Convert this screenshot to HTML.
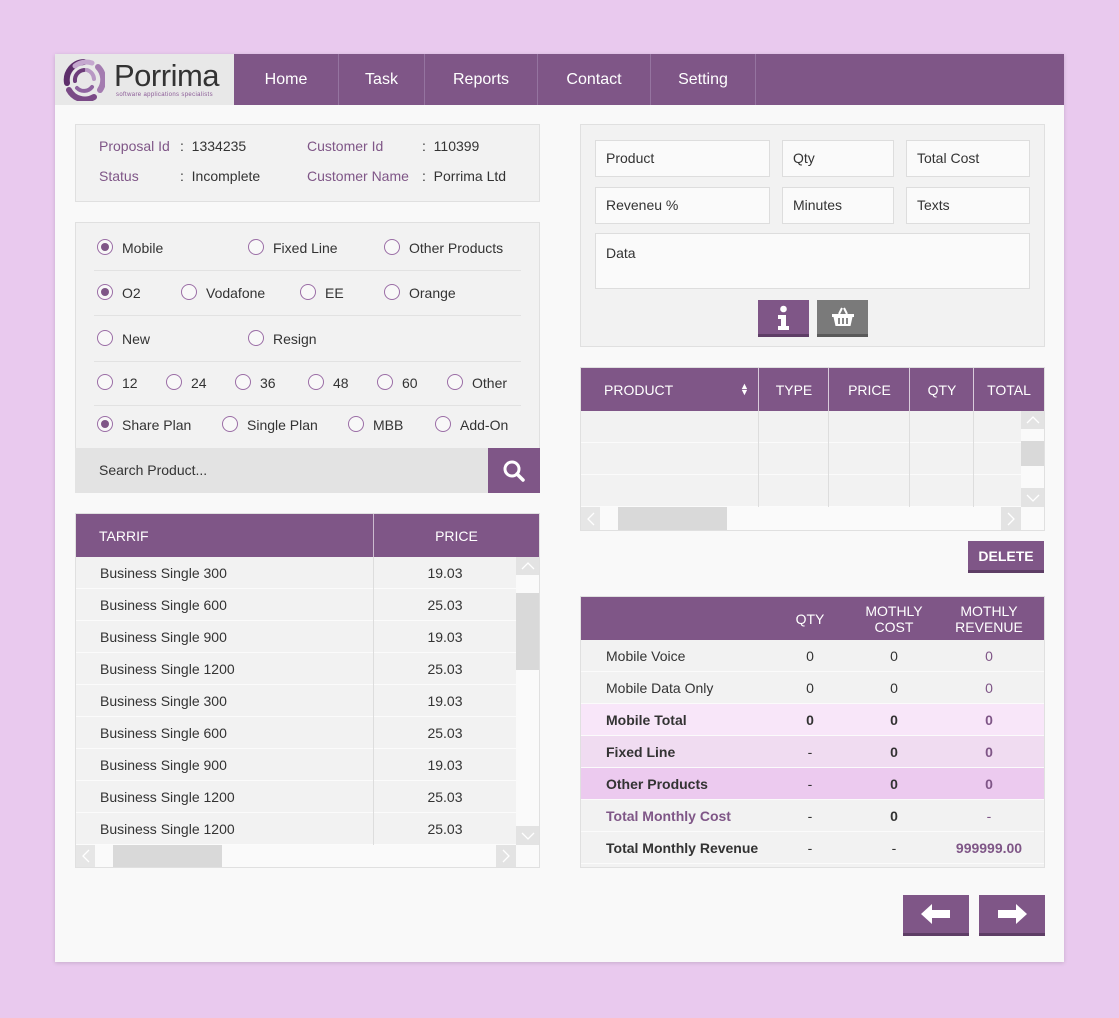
<!DOCTYPE html>
<html><head><meta charset="utf-8"><style>
*{box-sizing:border-box;margin:0;padding:0}
body{width:1119px;height:1018px;background:#e9c9ee;font-family:"Liberation Sans",Arial,sans-serif;font-size:14px;color:#333;position:relative;overflow:hidden}
.card{position:absolute;left:55px;top:54px;width:1009px;height:908px;background:#f9f9f9;box-shadow:0 1px 4px rgba(0,0,0,.15)}
.a{position:absolute}
.nav{left:0;top:0;width:1009px;height:51px;background:#7f5687}
.logo{left:0;top:0;width:179px;height:51px;background:#e8e8e8}
.nav span{position:absolute;top:0;height:51px;line-height:51px;color:#fff;font-size:16px;text-align:center;border-right:1px solid #9574a0}
.box{background:#f2f2f2;border:1px solid #e0e0e0}
.p{color:#7f5687}
.lbl{position:absolute;font-size:14px}
.r{position:absolute;width:16px;height:16px;border:1px solid #9b6ea6;border-radius:50%;background:#f8f8f8}
.r.on::after{content:"";position:absolute;left:3px;top:3px;width:8px;height:8px;border-radius:50%;background:#7f5687}
.sep{position:absolute;left:18px;width:427px;height:1px;background:#e2e2e2}
.th{background:#7f5687;color:#fff;font-size:14px}
.row{position:absolute;height:32px;line-height:32px;background:#f2f2f2;border-bottom:1px solid #fbfbfb}
.inp{position:absolute;background:#fafafa;border:1px solid #ddd;padding-left:10px;line-height:35px;font-size:14px}
.btn{position:absolute;background:#7f5687;border-bottom:3px solid #5e3e66;color:#fff}
.sb{position:absolute;background:#d9d9d9}
.sb svg{position:absolute;left:50%;top:50%;transform:translate(-50%,-50%)}
.c{position:absolute;text-align:center}
</style></head><body>
<div class="card">
<div class="a nav">
 <div class="a logo">
  <svg class="a" style="left:8px;top:5px" width="42" height="42" viewBox="0 0 42 42">
   <g fill="none" stroke-linecap="round">
    <path d="M21 3 A18 18 0 0 0 4 24" stroke="#5e2f6b" stroke-width="6"/>
    <path d="M6 31 A18 18 0 0 0 31 38" stroke="#7a4a86" stroke-width="6"/>
    <path d="M37 31 A18 18 0 0 0 35 8" stroke="#a47cb0" stroke-width="6"/>
    <path d="M29 4 A18 18 0 0 0 12 7" stroke="#c5a8cf" stroke-width="5"/>
    <path d="M21 11 A10 10 0 0 0 12 22" stroke="#6d3d7a" stroke-width="4"/>
    <path d="M14 29 A10 10 0 0 0 29 28" stroke="#8f64a0" stroke-width="4"/>
    <path d="M31 20 A10 10 0 0 0 24 11" stroke="#b898c4" stroke-width="4"/>
   </g>
  </svg>
  <div class="a" style="left:59px;top:4px;font-size:31px;color:#333;letter-spacing:-0.5px">Porrima</div>
  <div class="a p" style="left:61px;top:38px;font-size:6px;color:#8a5a96;letter-spacing:0.35px">software applications specialists</div>
 </div>
 <span style="left:179px;width:105px">Home</span>
 <span style="left:284px;width:86px">Task</span>
 <span style="left:370px;width:113px">Reports</span>
 <span style="left:483px;width:113px">Contact</span>
 <span style="left:596px;width:105px">Setting</span>
</div>

<div class="a box" style="left:20px;top:70px;width:465px;height:78px">
 <div class="lbl p" style="left:23px;top:13px">Proposal Id</div><div class="lbl" style="left:104px;top:13px">:&nbsp; 1334235</div>
 <div class="lbl p" style="left:231px;top:13px">Customer Id</div><div class="lbl" style="left:346px;top:13px">:&nbsp; 110399</div>
 <div class="lbl p" style="left:23px;top:43px">Status</div><div class="lbl" style="left:104px;top:43px">:&nbsp; Incomplete</div>
 <div class="lbl p" style="left:231px;top:43px">Customer Name</div><div class="lbl" style="left:346px;top:43px">:&nbsp; Porrima Ltd</div>
</div>

<div class="a box" style="left:20px;top:168px;width:465px;height:271px">
 <div class="r on" style="left:21px;top:16px"></div><div class="lbl" style="left:46px;top:17px">Mobile</div>
 <div class="r" style="left:172px;top:16px"></div><div class="lbl" style="left:197px;top:17px">Fixed Line</div>
 <div class="r" style="left:308px;top:16px"></div><div class="lbl" style="left:333px;top:17px">Other Products</div>
 <div class="sep" style="top:47px"></div>
 <div class="r on" style="left:21px;top:61px"></div><div class="lbl" style="left:46px;top:62px">O2</div>
 <div class="r" style="left:105px;top:61px"></div><div class="lbl" style="left:130px;top:62px">Vodafone</div>
 <div class="r" style="left:224px;top:61px"></div><div class="lbl" style="left:249px;top:62px">EE</div>
 <div class="r" style="left:308px;top:61px"></div><div class="lbl" style="left:333px;top:62px">Orange</div>
 <div class="sep" style="top:92px"></div>
 <div class="r" style="left:21px;top:107px"></div><div class="lbl" style="left:46px;top:108px">New</div>
 <div class="r" style="left:172px;top:107px"></div><div class="lbl" style="left:197px;top:108px">Resign</div>
 <div class="sep" style="top:138px"></div>
 <div class="r" style="left:21px;top:151px"></div><div class="lbl" style="left:46px;top:152px">12</div>
 <div class="r" style="left:90px;top:151px"></div><div class="lbl" style="left:115px;top:152px">24</div>
 <div class="r" style="left:159px;top:151px"></div><div class="lbl" style="left:184px;top:152px">36</div>
 <div class="r" style="left:232px;top:151px"></div><div class="lbl" style="left:257px;top:152px">48</div>
 <div class="r" style="left:301px;top:151px"></div><div class="lbl" style="left:326px;top:152px">60</div>
 <div class="r" style="left:371px;top:151px"></div><div class="lbl" style="left:396px;top:152px">Other</div>
 <div class="sep" style="top:182px"></div>
 <div class="r on" style="left:21px;top:193px"></div><div class="lbl" style="left:46px;top:194px">Share Plan</div>
 <div class="r" style="left:146px;top:193px"></div><div class="lbl" style="left:171px;top:194px">Single Plan</div>
 <div class="r" style="left:272px;top:193px"></div><div class="lbl" style="left:297px;top:194px">MBB</div>
 <div class="r" style="left:359px;top:193px"></div><div class="lbl" style="left:384px;top:194px">Add-On</div>
 <div class="a" style="left:-1px;top:225px;width:413px;height:45px;background:#e3e3e3"><div class="lbl" style="left:24px;top:14px">Search Product...</div></div>
 <div class="a" style="left:412px;top:225px;width:52px;height:45px;background:#7f5687">
  <svg class="a" style="left:14px;top:11px" width="24" height="24" viewBox="0 0 24 24"><circle cx="10" cy="10" r="7" fill="none" stroke="#fff" stroke-width="3"/><path d="M15 15l6 6" stroke="#fff" stroke-width="3.5" stroke-linecap="round"/></svg>
 </div>
</div>

<div class="a box" style="left:20px;top:459px;width:465px;height:355px;background:#fafafa">
 <div class="a th" style="left:0;top:0;width:463px;height:43px">
  <div class="lbl" style="left:23px;top:14px">TARRIF</div>
  <div class="a" style="left:297px;top:0;width:1px;height:43px;background:#fff;opacity:.6"></div>
  <div class="c" style="left:298px;width:165px;top:14px">PRICE</div>
 </div>
 <div id="tr"></div>
 <div class="a" style="left:297px;top:43px;width:1px;height:288px;background:#ddd"></div>
 <div class="sb" style="left:440px;top:43px;width:23px;height:18px;background:#e3e3e3"><svg width="14" height="8" viewBox="0 0 14 8"><path d="M1 7l6-6 6 6" fill="none" stroke="#fff" stroke-width="1.3"/></svg></div>
 <div class="sb" style="left:440px;top:79px;width:23px;height:77px"></div>
 <div class="sb" style="left:440px;top:312px;width:23px;height:19px;background:#e3e3e3"><svg width="14" height="8" viewBox="0 0 14 8"><path d="M1 1l6 6 6-6" fill="none" stroke="#fff" stroke-width="1.3"/></svg></div>
 <div class="sb" style="left:0;top:331px;width:19px;height:22px;background:#e6e6e6"><svg width="8" height="14" viewBox="0 0 8 14"><path d="M7 1L1 7l6 6" fill="none" stroke="#fff" stroke-width="1.3"/></svg></div>
 <div class="sb" style="left:37px;top:331px;width:109px;height:22px"></div>
 <div class="sb" style="left:420px;top:331px;width:20px;height:22px;background:#e3e3e3"><svg width="8" height="14" viewBox="0 0 8 14"><path d="M1 1l6 6-6 6" fill="none" stroke="#fff" stroke-width="1.3"/></svg></div>
</div>

<div class="a box" style="left:525px;top:70px;width:465px;height:223px">
 <div class="inp" style="left:14px;top:15px;width:175px;height:37px">Product</div>
 <div class="inp" style="left:201px;top:15px;width:112px;height:37px">Qty</div>
 <div class="inp" style="left:325px;top:15px;width:124px;height:37px">Total Cost</div>
 <div class="inp" style="left:14px;top:62px;width:175px;height:37px">Reveneu %</div>
 <div class="inp" style="left:201px;top:62px;width:112px;height:37px">Minutes</div>
 <div class="inp" style="left:325px;top:62px;width:124px;height:37px">Texts</div>
 <div class="inp" style="left:14px;top:108px;width:435px;height:56px;line-height:20px;padding-top:9px">Data</div>
 <div class="btn" style="left:177px;top:175px;width:51px;height:37px">
  <svg class="a" style="left:18px;top:5px" width="15" height="26" viewBox="0 0 15 26"><circle cx="7.5" cy="4" r="3.3" fill="#fff"/><path d="M2 10h8v11h3v4H2v-4h3v-7H2z" fill="#fff"/></svg>
 </div>
 <div class="btn" style="left:236px;top:175px;width:51px;height:37px;background:#7a7a7a;border-bottom-color:#5a5a5a">
  <svg class="a" style="left:13px;top:5px" width="26" height="24" viewBox="0 0 26 24"><path d="M9 9L12 3M17 9L14 3" stroke="#fff" stroke-width="2" fill="none"/><path d="M2 9h22v3h-1.5l-2 9h-15l-2-9H2z" fill="#fff"/><path d="M9 13v6M13 13v6M17 13v6" stroke="#7a7a7a" stroke-width="1.8"/></svg>
 </div>
</div>

<div class="a box" style="left:525px;top:313px;width:465px;height:164px;background:#fafafa">
 <div class="a th" style="left:0;top:0;width:463px;height:43px">
  <div class="lbl" style="left:23px;top:14px">PRODUCT</div>
  <div class="lbl" style="left:159px;top:13px;font-size:9px">&#9650;</div>
  <div class="lbl" style="left:159px;top:19px;font-size:9px">&#9660;</div>
  <div class="c" style="left:178px;width:70px;top:14px">TYPE</div>
  <div class="c" style="left:248px;width:81px;top:14px">PRICE</div>
  <div class="c" style="left:329px;width:64px;top:14px">QTY</div>
  <div class="c" style="left:393px;width:70px;top:14px">TOTAL</div>
  <div class="a" style="left:177px;top:0;width:1px;height:43px;background:#fff;opacity:.7"></div>
  <div class="a" style="left:247px;top:0;width:1px;height:43px;background:#fff;opacity:.7"></div>
  <div class="a" style="left:328px;top:0;width:1px;height:43px;background:#fff;opacity:.7"></div>
  <div class="a" style="left:392px;top:0;width:1px;height:43px;background:#fff;opacity:.7"></div>
 </div>
 <div class="row" style="left:0;top:43px;width:440px"></div>
 <div class="row" style="left:0;top:75px;width:440px"></div>
 <div class="row" style="left:0;top:107px;width:440px;height:32px"></div>
 <div class="a" style="left:177px;top:43px;width:1px;height:96px;background:#ddd"></div>
 <div class="a" style="left:247px;top:43px;width:1px;height:96px;background:#ddd"></div>
 <div class="a" style="left:328px;top:43px;width:1px;height:96px;background:#ddd"></div>
 <div class="a" style="left:392px;top:43px;width:1px;height:96px;background:#ddd"></div>
 <div class="sb" style="left:440px;top:43px;width:23px;height:18px;background:#e3e3e3"><svg width="14" height="8" viewBox="0 0 14 8"><path d="M1 7l6-6 6 6" fill="none" stroke="#fff" stroke-width="1.3"/></svg></div>
 <div class="sb" style="left:440px;top:73px;width:23px;height:25px"></div>
 <div class="sb" style="left:440px;top:120px;width:23px;height:19px;background:#e3e3e3"><svg width="14" height="8" viewBox="0 0 14 8"><path d="M1 1l6 6 6-6" fill="none" stroke="#fff" stroke-width="1.3"/></svg></div>
 <div class="sb" style="left:0;top:139px;width:19px;height:23px;background:#e6e6e6"><svg width="8" height="14" viewBox="0 0 8 14"><path d="M7 1L1 7l6 6" fill="none" stroke="#fff" stroke-width="1.3"/></svg></div>
 <div class="sb" style="left:37px;top:139px;width:109px;height:23px"></div>
 <div class="sb" style="left:420px;top:139px;width:20px;height:23px;background:#e3e3e3"><svg width="8" height="14" viewBox="0 0 8 14"><path d="M1 1l6 6-6 6" fill="none" stroke="#fff" stroke-width="1.3"/></svg></div>
</div>

<div class="btn" style="left:913px;top:487px;width:76px;height:32px;font-weight:bold;font-size:14px;text-align:center;line-height:30px">DELETE</div>

<div class="a box" style="left:525px;top:542px;width:465px;height:272px">
 <div class="a th" style="left:0;top:0;width:463px;height:43px;line-height:16px">
  <div class="c" style="left:199px;width:60px;top:14px">QTY</div>
  <div class="c" style="left:268px;width:90px;top:6px">MOTHLY<br>COST</div>
  <div class="c" style="left:358px;width:100px;top:6px">MOTHLY<br>REVENUE</div>
 </div>
 <div id="sm"></div>
</div>

<div class="btn" style="left:848px;top:841px;width:66px;height:41px">
 <svg class="a" style="left:17px;top:8px" width="32" height="22" viewBox="0 0 32 22"><path d="M1 11L12 1v6h18v8H12v6z" fill="#fff"/></svg>
</div>
<div class="btn" style="left:924px;top:841px;width:66px;height:41px">
 <svg class="a" style="left:17px;top:8px" width="32" height="22" viewBox="0 0 32 22"><path d="M31 11L20 1v6H2v8h18v6z" fill="#fff"/></svg>
</div>
</div>
<script>
var t='',names=['Business Single 300','Business Single 600','Business Single 900','Business Single 1200','Business Single 300','Business Single 600','Business Single 900','Business Single 1200','Business Single 1200'],pr=['19.03','25.03','19.03','25.03','19.03','25.03','19.03','25.03','25.03'];
for(var i=0;i<9;i++){t+='<div class="row" style="left:0;top:'+(43+i*32)+'px;width:440px"><div class="a" style="left:24px">'+names[i]+'</div><div class="c" style="left:298px;width:142px">'+pr[i]+'</div></div>';}
document.getElementById('tr').innerHTML=t;
var s=[['Mobile Voice','0','0','0','#f2f2f2',0,'#333'],['Mobile Data Only','0','0','0','#f2f2f2',0,'#333'],['Mobile Total','0','0','0','#f8e6f9',1,'#333'],['Fixed Line','-','0','0','#f0dcf1',1,'#333'],['Other Products','-','0','0','#eccaef',1,'#333'],['Total Monthly Cost','-','0','-','#f2f2f2',1,'#7f5687'],['Total Monthly Revenue','-','-','999999.00','#f2f2f2',1,'#333']];
var h='';
for(var i=0;i<7;i++){var r=s[i],fw=r[5]?'bold':'normal';
h+='<div class="row" style="left:0;top:'+(43+i*32)+'px;width:463px;background:'+r[4]+';font-weight:'+fw+'"><div class="a" style="left:25px;color:'+r[6]+'">'+r[0]+'</div><div class="c" style="left:199px;width:60px;font-weight:'+(r[1]=='-'?'normal':fw)+'">'+r[1]+'</div><div class="c" style="left:268px;width:90px;font-weight:'+(r[2]=='-'?'normal':fw)+'">'+r[2]+'</div><div class="c" style="left:358px;width:100px;color:#7f5687;font-weight:'+(r[3]=='-'?'normal':fw)+'">'+r[3]+'</div></div>';}
document.getElementById('sm').innerHTML=h;
</script>
</body></html>
